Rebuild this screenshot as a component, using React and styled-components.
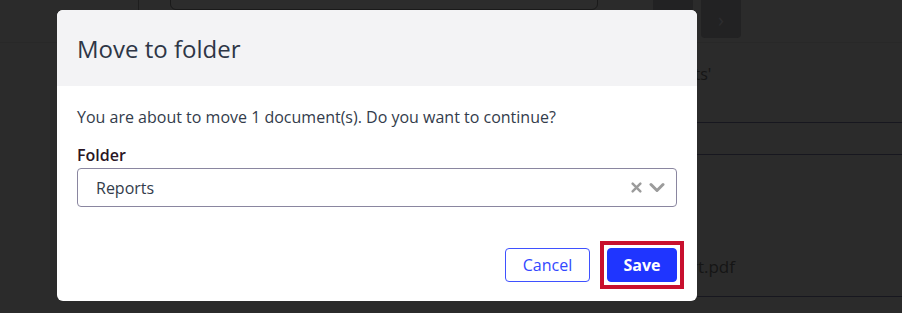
import React from 'react';
import styled, { createGlobalStyle } from 'styled-components';

const GlobalStyle = createGlobalStyle`
    html, body {
        margin: 0;
        padding: 0;
        background: #2b2b2b;
        font-family: "Open Sans", "Noto Sans", sans-serif;
    }
    * { box-sizing: border-box; }
`;

const Page = styled.div`
    position: relative;
    width: 902px;
    height: 313px;
    overflow: hidden;
    background: #2b2b2b;
`;

const TopBar = styled.div`
    display: flex;
    align-items: flex-start;
    height: 43px;
    padding-left: 138px;
    border-bottom: 1px solid #282828;
`;

const NavDivider = styled.div`
    width: 22px;
    height: 10px;
    border-left: 1px solid #1e1e1e;
    margin-right: 10px;
`;

const SearchBox = styled.div`
    width: 428px;
    height: 40px;
    margin-top: -30px;
    border: 1px solid #1a1a1a;
    border-radius: 6px;
    background: #2c2c2c;
    margin-right: 55px;
`;

const IconBox = styled.div`
    width: 40px;
    height: 38px;
    margin-right: 8px;
    background: #222223;
    border-radius: 0 0 4px 4px;
    display: flex;
    align-items: center;
    justify-content: center;
    color: #2d2d2f;
    font-size: 20px;
`;

const Content = styled.div`
    display: flex;
    flex-direction: column;
    padding-left: 560px;
`;

const Row = styled.div`
    height: ${p => p.h}px;
    display: flex;
    align-items: ${p => p.align || 'center'};
    border-bottom: ${p => p.line ? '1px solid #17171f' : 'none'};
    color: #151515;
    font-size: ${p => p.size || 16}px;
    padding-left: ${p => p.indent || 0}px;
    padding-bottom: ${p => p.bottom || 0}px;
`;

const Overlay = styled.div`
    position: absolute;
    left: 57px;
    top: 10px;
    width: 640px;
    height: 291px;
    background: #ffffff;
    border-radius: 6px;
    overflow: hidden;
    display: flex;
    flex-direction: column;
`;

const Header = styled.div`
    height: 76px;
    background: #f3f3f5;
    display: flex;
    align-items: center;
    padding: 0 20px;
`;

const Title = styled.h2`
    margin: 0;
    font-size: 24px;
    font-weight: 400;
    color: #2e3646;
`;

const Body = styled.div`
    padding: 19px 20px 0;
    display: flex;
    flex-direction: column;
`;

const Message = styled.p`
    margin: 0;
    font-size: 16px;
    line-height: 24px;
    color: #333c4b;
`;

const Label = styled.label`
    margin-top: 14px;
    font-size: 16px;
    line-height: 24px;
    font-weight: 600;
    color: #2a1624;
`;

const Select = styled.div`
    margin-top: 1px;
    height: 39px;
    border: 1px solid #8a86a0;
    border-radius: 4px;
    display: flex;
    align-items: center;
    padding: 0 11px 0 18px;
    font-size: 16px;
    color: #333c4b;
`;

const Value = styled.span`
    flex: 1;
`;

const Icons = styled.div`
    display: flex;
    align-items: center;
    gap: 7px;
    color: #9b9b9b;
`;

const Footer = styled.div`
    margin-top: auto;
    padding: 0 20px 19px;
    display: flex;
    justify-content: flex-end;
    gap: 17px;
`;

const Button = styled.button`
    position: relative;
    height: 34px;
    width: ${p => p.w}px;
    border-radius: 4px;
    font-family: inherit;
    font-size: 16px;
    cursor: pointer;
    border: 1px solid ${p => p.primary ? '#1f35ff' : '#3f51ff'};
    background: ${p => p.primary ? '#1f35ff' : '#ffffff'};
    color: ${p => p.primary ? '#ffffff' : '#3348ff'};
    font-weight: ${p => p.primary ? 700 : 500};
    outline: none;

    &::after {
        content: '';
        display: ${p => p.focused ? 'block' : 'none'};
        position: absolute;
        inset: -8px;
        border: 4px solid #c8102e;
    }
`;

const ClearIcon = () => (
    <svg width="11" height="11" viewBox="0 0 10 10">
        <path d="M1.5 1.5 L8.5 8.5 M8.5 1.5 L1.5 8.5" stroke="currentColor" strokeWidth="2.2" strokeLinecap="round" />
    </svg>
);

const ChevronIcon = () => (
    <svg width="16" height="11" viewBox="0 0 16 11">
        <path d="M2 2.5 L8 8.5 L14 2.5" fill="none" stroke="currentColor" strokeWidth="3" strokeLinecap="round" strokeLinejoin="round" />
    </svg>
);

export default function App() {
    return (
        <Page>
            <GlobalStyle />
            <TopBar>
                <NavDivider />
                <SearchBox />
                <IconBox />
                <IconBox>›</IconBox>
            </TopBar>
            <Content>
                <Row h={62} indent={7} size={16}>Shared documents'</Row>
                <Row h={18} line />
                <Row h={32} line />
                <Row h={142} indent={131} size={17} align="flex-end" bottom={18} line>rt.pdf</Row>
            </Content>
            <Overlay role="dialog">
                <Header>
                    <Title>Move to folder</Title>
                </Header>
                <Body>
                    <Message>You are about to move 1 document(s). Do you want to continue?</Message>
                    <Label>Folder</Label>
                    <Select>
                        <Value>Reports</Value>
                        <Icons>
                            <ClearIcon />
                            <ChevronIcon />
                        </Icons>
                    </Select>
                </Body>
                <Footer>
                    <Button w={85}>Cancel</Button>
                    <Button w={70} primary focused>Save</Button>
                </Footer>
            </Overlay>
        </Page>
    );
}
